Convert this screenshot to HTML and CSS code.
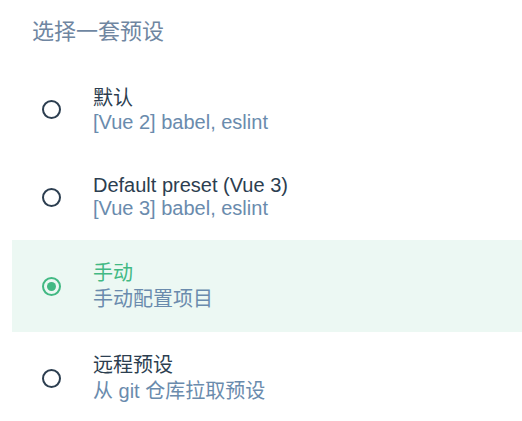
FILE: index.html
```html
<!DOCTYPE html>
<html lang="zh">
<head>
<meta charset="utf-8">
<title>选择一套预设</title>
<link rel="stylesheet" href="styles.css">
</head>
<body>
<div class="panel">
  <h2 class="heading">选择一套预设</h2>
  <ul class="presets">
    <li class="preset">
      <span class="radio"></span>
      <div class="info">
        <div class="name cjk">默认</div>
        <div class="desc">[Vue 2] babel, eslint</div>
      </div>
    </li>
    <li class="preset">
      <span class="radio"></span>
      <div class="info">
        <div class="name">Default preset (Vue 3)</div>
        <div class="desc">[Vue 3] babel, eslint</div>
      </div>
    </li>
    <li class="preset selected">
      <span class="radio"></span>
      <div class="info">
        <div class="name cjk">手动</div>
        <div class="desc cjk">手动配置项目</div>
      </div>
    </li>
    <li class="preset">
      <span class="radio"></span>
      <div class="info">
        <div class="name cjk">远程预设</div>
        <div class="desc cjk">从 git 仓库拉取预设</div>
      </div>
    </li>
  </ul>
</div>
</body>
</html>
```

FILE: styles.css
```css
html, body {
  margin: 0;
  padding: 0;
  background: #ffffff;
}

body {
  font-family: "Liberation Sans", Arial, "Noto Sans CJK SC", sans-serif;
  font-size: 20px;
  color: #2c3e50;
}

.panel {
  padding-left: 12px;
  overflow: hidden;
}

.heading {
  margin: 17px 0 18px 20px;
  font-size: 22px;
  font-weight: normal;
  line-height: 30px;
  color: #6f86a1;
}

.presets {
  list-style: none;
  margin: 0;
  padding: 0;
}

.preset {
  display: flex;
  align-items: center;
  gap: 32px;
  padding: 20px 0 20px 30px;
}

.preset.selected {
  background: #ecf8f3;
}

.radio {
  flex: none;
  box-sizing: border-box;
  width: 19px;
  height: 19px;
  border: 2px solid #2c3e50;
  border-radius: 50%;
  display: flex;
  align-items: center;
  justify-content: center;
}

.selected .radio {
  border-color: #42b983;
}

.selected .radio::after {
  content: "";
  width: 9px;
  height: 9px;
  border-radius: 50%;
  background: #42b983;
}

.info {
  display: flex;
  flex-direction: column;
}

.name,
.desc {
  line-height: 23px;
  white-space: nowrap;
}

.name.cjk,
.desc.cjk {
  line-height: 26px;
}

.desc {
  color: #6a8bad;
}

.selected .name {
  color: #42b983;
}
```
